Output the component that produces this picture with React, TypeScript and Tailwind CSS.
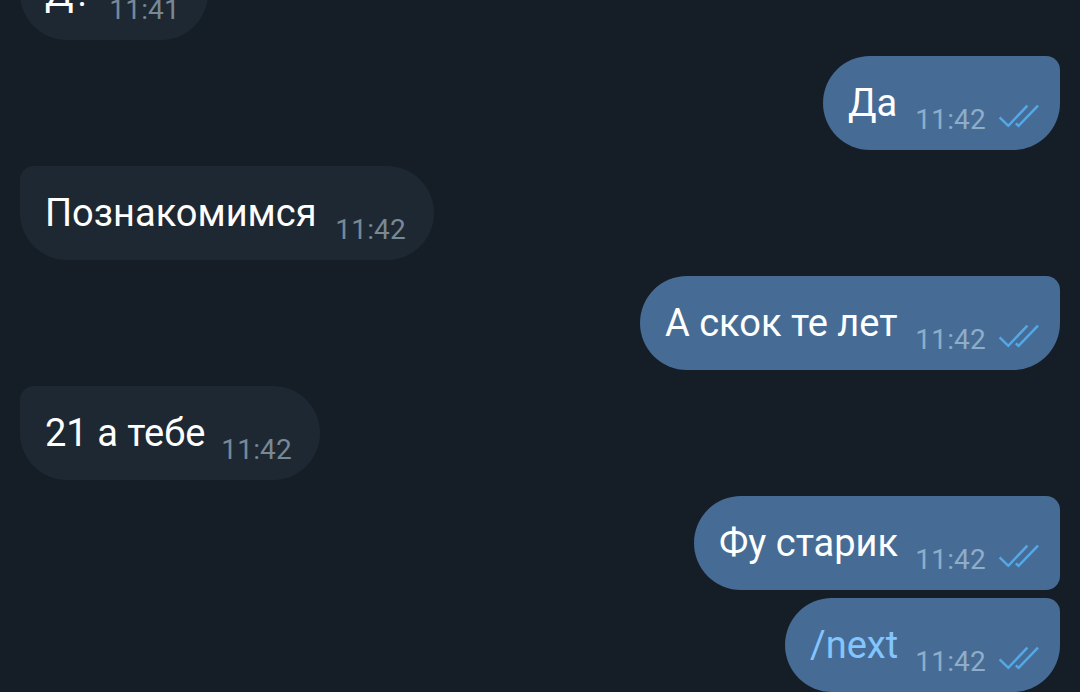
import React from 'react';
import clsx from 'clsx';

interface Message {
  id: number;
  text: string;
  time: string;
  out?: boolean;
  command?: boolean;
  grouped?: boolean;
  width: string;
}

const messages: Message[] = [
  { id: 1, text: 'Д?', time: '11:41', width: 'w-[188px]' },
  { id: 2, text: 'Да', time: '11:42', out: true, width: 'w-[237px]' },
  { id: 3, text: 'Познакомимся', time: '11:42', width: 'w-[414px]' },
  { id: 4, text: 'А скок те лет', time: '11:42', out: true, width: 'w-[420px]' },
  { id: 5, text: '21 а тебе', time: '11:42', width: 'w-[300px]' },
  { id: 6, text: 'Фу старик', time: '11:42', out: true, grouped: true, width: 'w-[366px]' },
  { id: 7, text: '/next', time: '11:42', out: true, command: true, width: 'w-[275px]' },
];

function ReadChecks() {
  return (
    <svg
      width="42"
      height="24"
      viewBox="0 0 42 24"
      fill="none"
      stroke="#55a8e6"
      strokeWidth="2.5"
      className="mb-[22px] ml-3 shrink-0"
    >
      <path d="M1.6 13.4L10.3 21.8L29.4 1.6" />
      <path d="M17.8 19.4L20.6 21.8L40 1.6" />
    </svg>
  );
}

function Bubble({ message }: { message: Message }) {
  const { text, time, out, command, grouped, width } = message;

  return (
    <div
      className={clsx(
        'flex h-[94px] shrink-0 items-end whitespace-nowrap pl-[25px]',
        width,
        out
          ? 'self-end rounded-l-[47px] rounded-tr-[14px] bg-[#466c95] pr-5'
          : 'self-start rounded-r-[47px] rounded-tl-[14px] rounded-bl-[47px] bg-[#1e2833] pr-7',
        out && (grouped ? 'mb-2 rounded-br-[14px]' : 'mb-4 rounded-br-[47px]'),
        !out && 'mb-4',
        'last:mb-0'
      )}
    >
      <span className={clsx('text-[38px] leading-[94px]', command ? 'text-[#83c5ff]' : 'text-white')}>
        {text}
      </span>
      <span
        className={clsx(
          'mb-4 ml-auto text-[28px] leading-7 tracking-[0.2px]',
          out ? 'text-[#8eadca]' : 'text-[#788995]'
        )}
      >
        {time}
      </span>
      {out && <ReadChecks />}
    </div>
  );
}

export default function App() {
  return (
    <div className="flex h-[692px] w-[1080px] flex-col justify-end overflow-hidden bg-[#151e27] px-5 font-['Roboto',sans-serif]">
      {messages.map((message) => (
        <Bubble key={message.id} message={message} />
      ))}
    </div>
  );
}
